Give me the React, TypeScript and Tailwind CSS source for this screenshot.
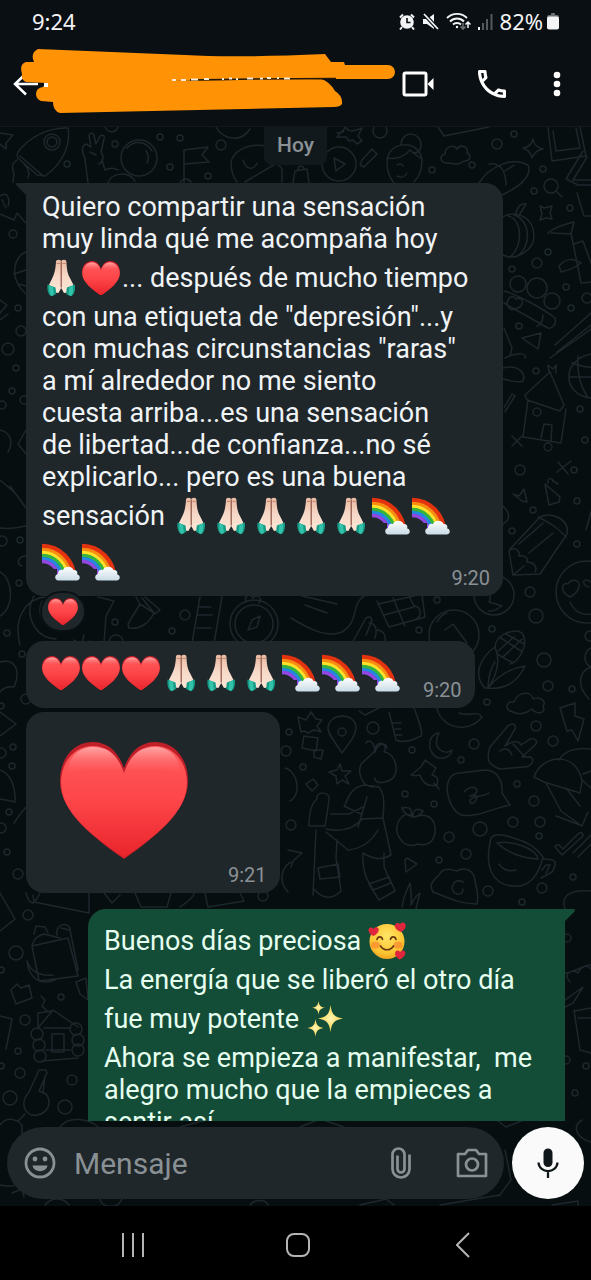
import type { ReactNode } from 'react';

const EmojiDefs = () => (
  <svg className="absolute w-0 h-0" aria-hidden="true">
    <defs>
      <linearGradient id="heartFill" x1="0" y1="0" x2="0" y2="1">
        <stop offset="0" stopColor="#ff5a5c" />
        <stop offset="0.5" stopColor="#fd4548" />
        <stop offset="1" stopColor="#e8242b" />
      </linearGradient>
      <linearGradient id="heartShine" x1="0" y1="0" x2="0" y2="1">
        <stop offset="0" stopColor="#ffb9b9" stopOpacity="0.8" />
        <stop offset="1" stopColor="#ff5a5c" stopOpacity="0" />
      </linearGradient>
      <linearGradient id="skin" x1="0" y1="0" x2="0" y2="1">
        <stop offset="0" stopColor="#e9b9a2" />
        <stop offset="0.5" stopColor="#f7d9c8" />
        <stop offset="1" stopColor="#fde6d6" />
      </linearGradient>
      <linearGradient id="cloud" x1="0" y1="0" x2="0" y2="1">
        <stop offset="0" stopColor="#ffffff" />
        <stop offset="1" stopColor="#c9dbe6" />
      </linearGradient>
      <radialGradient id="face" cx="0.5" cy="0.35" r="0.7">
        <stop offset="0" stopColor="#ffe566" />
        <stop offset="0.7" stopColor="#fcc431" />
        <stop offset="1" stopColor="#f09a1c" />
      </radialGradient>
      <radialGradient id="spark">
        <stop offset="0" stopColor="#fff6b0" />
        <stop offset="1" stopColor="#f7ce4a" />
      </radialGradient>
    </defs>
  </svg>
);

const HeartShape = () => (
  <>
    <path
      d="M64 26C58 9 47 0 33 0 13 0 0 17 0 39c0 31 34 57 64 78 30-21 64-47 64-78C128 17 115 0 95 0 81 0 70 9 64 26Z"
      fill="#c01e28"
    />
    <path
      d="M64 31C58 13 47 4 33 4 15 4 1 19 1 41c0 30 33 54 63 75 30-21 63-45 63-75C127 19 113 4 95 4 81 4 70 13 64 31Z"
      fill="url(#heartFill)"
    />
    <path d="M33 5c16 0 25 9 30 24-18-3-40-3-56 4C7 18 17 5 33 5Z" fill="url(#heartShine)" />
    <path d="M95 5C79 5 70 14 65 29c18-3 40-3 56 4C121 18 111 5 95 5Z" fill="url(#heartShine)" />
  </>
);

const Heart = ({ className }: { className: string }) => (
  <svg viewBox="0 0 128 117" className={className} role="img" aria-label="corazón rojo">
    <HeartShape />
  </svg>
);

// overflow-hidden puts the baseline on the bottom edge, whatever the drawing's height
const EmojiCell = ({ children }: { children: ReactNode }) => (
  <span className="inline-block h-[46px] w-10 overflow-hidden align-[-14px]">
    <span className="flex h-full items-center">{children}</span>
  </span>
);

const HeartEmoji = () => (
  <EmojiCell>
    <Heart className="w-[38px]" />
  </EmojiCell>
);

const Pray = () => (
  <EmojiCell>
    <svg viewBox="0 0 38 38" className="w-[38px]" role="img" aria-label="manos juntas">
      <path
        d="M14 2.500Q14 .8 16.200.8T19.200 2q.8-1.200 3-1.200t2.200 1.700C24.800 9 25 14 28.500 20l3.500 7-7 6.500-3 .5-2.800-5-2.800 5-3-.5-7-6.500 3.500-7C13 14 13.600 9 14 2.500Z"
        fill="url(#skin)"
      />
      <path d="M19.200 2.500v26" stroke="#8d5547" strokeWidth="1.200" fill="none" />
      <path d="M14.500 4.500h3.500M20.400 4.500h3.500" stroke="#b77f6c" strokeWidth="0.8" fill="none" />
      <path d="M5.500 25.500 13.500 28.500l.8 6.500-5 2.200C6 35.500 5 31 5.500 25.500Z" fill="#149c86" />
      <path d="m7.500 26.500 3.500 1.300.9 8.200-2.400 1c-2.200-2-2.600-6.300-2-10.500Z" fill="#35c3ab" />
      <path d="M32.900 25.500 24.900 28.500l-.8 6.500 5 2.200c3.300-1.700 4.300-6.200 3.800-11.700Z" fill="#149c86" />
      <path d="m30.900 26.500-3.500 1.300-.9 8.200 2.400 1c2.200-2 2.600-6.300 2-10.500Z" fill="#35c3ab" />
    </svg>
  </EmojiCell>
);

const rainbowBands = [
  { r: 34, color: '#e5320f' },
  { r: 30, color: '#fb8c12' },
  { r: 27, color: '#fde02a' },
  { r: 24, color: '#35b53c' },
  { r: 21, color: '#2388e0' },
  { r: 18, color: '#9147e0' },
];

const Rainbow = () => (
  <EmojiCell>
    <svg viewBox="0 0 38 38" className="w-[38px]" role="img" aria-label="arcoíris">
      {rainbowBands.map((band, i) => {
        const next = rainbowBands[i + 1]?.r ?? 15;
        const mid = (band.r + next) / 2;
        return (
          <path
            key={band.color}
            d={`M0 ${35 - mid}A${mid} ${mid} 0 0 1 ${mid} 35`}
            fill="none"
            stroke={band.color}
            strokeWidth={band.r - next + 0.3}
          />
        );
      })}
      <path d="M0 26h15v12H0z" fill="#20272b" />
      <path d="M34 27h4v11H20z" fill="#20272b" />
      <path
        d="M16.500 37.500c-4 0-4.500-5.800-.6-6.500 0-3.500 3-5 5-3.700 1.300-4.300 8.600-5.300 10.600-.3 3.500-.5 4.500 2.500 3.500 4.300 3.800.7 3.800 6.200-.5 6.200Z"
        fill="url(#cloud)"
      />
    </svg>
  </EmojiCell>
);

const LoveFace = () => (
  <EmojiCell>
    <svg viewBox="0 0 38 38" className="w-[38px]" role="img" aria-label="cara con corazones">
      <circle cx="19" cy="19.500" r="17.500" fill="url(#face)" />
      <ellipse cx="7.500" cy="23" rx="4.500" ry="3.500" fill="#f97b2b" opacity="0.6" />
      <ellipse cx="30" cy="23" rx="4.500" ry="3.500" fill="#f97b2b" opacity="0.6" />
      <path
        d="M9 17.500c.8-3.500 4.700-3.500 5.500-.2M22.500 17.300c.8-3.300 4.700-3.300 5.500.2M12.500 24c3 5 10 5 13 0"
        fill="none"
        stroke="#6b3a12"
        strokeWidth="1.700"
        strokeLinecap="round"
      />
      <path d="M5.500 14C1 11.500-.5 8.500 1 6.500s4-1 4.500.5c1-2 4-2.500 5-.2.900 2.700-1.500 5.200-5 7.200Z" fill="#e0263c" />
      <path d="M33 10c-5-2-7-4.800-6-7.200s4.200-2 5-.4c.7-2 4.500-2.800 5.500 0 .8 2.600-1 5.600-4.500 7.600Z" fill="#e0263c" />
      <path d="M31.500 37.500c-4-2.500-5.200-5.500-4-7.700s4-1.500 4.500.2c1-2 4.500-2.200 5.200.2.800 2.700-2 5.800-5.700 7.300Z" fill="#e0263c" />
    </svg>
  </EmojiCell>
);

const Sparkles = () => (
  <EmojiCell>
    <svg viewBox="0 0 38 38" className="w-[38px]" role="img" aria-label="destellos">
      <path d="M24.500 5c1.200 9 3.500 12 12.500 13.500-9 1.500-11.300 4.500-12.500 13.500C23.300 23 21 20 12 18.500 21 17 23.300 14 24.500 5Z" fill="url(#spark)" />
      <path d="M12.500 1c.7 4.500 1.900 6 6.500 6.700-4.600.7-5.800 2.200-6.500 6.700C11.800 9.900 10.600 8.400 6 7.700 10.600 7 11.800 5.500 12.500 1Z" fill="url(#spark)" />
      <path d="M9.500 19c.8 6 2.200 8 8 8.900-5.800.9-7.200 2.900-8 8.900-.8-6-2.200-8-8-8.900 5.800-.9 7.200-2.900 8-8.900Z" fill="url(#spark)" />
    </svg>
  </EmojiCell>
);

const dots = [
  [160, 137, 3], [180, 138, 3], [221, 145, 5], [115, 144, 3], [67, 164, 3], [170, 167, 3], [208, 176, 3],
  [380, 131, 7], [432, 170, 3], [472, 165, 3], [497, 144, 5], [514, 134, 3], [543, 169, 3], [534, 191, 3],
  [570, 208, 3], [548, 252, 3], [537, 263, 5], [512, 269, 3], [566, 287, 3], [518, 284, 8], [537, 288, 10],
  [552, 301, 8], [587, 298, 5], [571, 308, 3], [519, 326, 3], [536, 371, 3], [580, 409, 3], [537, 412, 4],
  [13, 234, 4], [18, 308, 3], [21, 331, 5], [8, 349, 6], [16, 368, 3], [12, 391, 3], [24, 400, 4],
  [2, 405, 4], [20, 540, 3], [2, 541, 5], [19, 583, 3], [7, 633, 3], [22, 654, 3], [26, 699, 5], [1, 706, 3],
  [533, 510, 3], [577, 501, 3], [512, 531, 3], [577, 544, 3], [530, 592, 5], [536, 616, 7], [437, 600, 3],
  [492, 629, 3], [419, 630, 3], [185, 615, 5], [115, 622, 3], [172, 631, 3], [116, 642, 7], [544, 660, 7],
  [548, 686, 5], [487, 702, 3], [572, 689, 3], [590, 636, 5], [373, 728, 6], [412, 750, 3], [474, 744, 5],
  [461, 760, 3], [536, 726, 5], [553, 741, 5], [517, 784, 3], [534, 801, 5], [303, 767, 3], [405, 794, 3],
  [434, 804, 3], [480, 829, 7], [449, 837, 5], [513, 822, 5], [540, 822, 5], [539, 836, 3], [466, 854, 5],
  [439, 860, 3], [488, 891, 5], [542, 888, 5], [573, 877, 3], [522, 902, 3], [289, 732, 3], [286, 751, 5],
  [291, 825, 5], [13, 747, 3], [1, 753, 5], [12, 766, 3], [9, 812, 3], [1, 828, 5], [7, 852, 3], [18, 874, 5],
  [28, 915, 5], [263, 896, 5], [16, 953, 7], [61, 997, 3], [1, 970, 3], [25, 1020, 5], [18, 1051, 3],
  [20, 1073, 5], [72, 1080, 5], [10, 1098, 7], [65, 1107, 7], [1, 1066, 3], [586, 1066, 3], [575, 1093, 3],
  [567, 938, 4], [566, 1060, 4], [548, 447, 4], [574, 470, 3], [520, 470, 5], [585, 440, 3],
];

// Line drawings behind the conversation
const Wallpaper = () => (
  <svg
    viewBox="0 127 591 1079"
    preserveAspectRatio="xMidYMin slice"
    className="absolute inset-0 h-full w-full"
    fill="none"
    stroke="#1e272b"
    strokeWidth="1.500"
    strokeLinecap="round"
    strokeLinejoin="round"
    aria-hidden="true"
  >
    {dots.map(([cx, cy, r]) => (
      <circle key={`${cx}-${cy}`} cx={cx} cy={cy} r={r} />
    ))}
    {/* rocket, peace sign, astronaut, flag */}
    <path d="M18 152c10-14 30-25 50-24 3 18-6 36-23 48l-8-1-19-17c-1-2-1-4 0-6ZM20 156l22 19M17 160c-6 4-5 8-3 14l-1 8M24 164c4 4 6 9 4 14" />
    <circle cx="52" cy="142" r="8" />
    <circle cx="52" cy="142" r="5" />
    <path d="m0 133 13 2-7 8v6l-6-5M85 158c-4-6-3-13 1-14l5 3-2-12c1-3 5-2 5 1l2 8 4-8c3-2 5 0 4 3l-3 13c3 4 3 9-2 12M85 159l3 24M102 160l3 10c6-3 10-2 13 0M90 152l6 3" />
    <circle cx="139" cy="158" r="18" />
    <path d="M127 148c8-9 20-6 25 3M146 151c3 4 3 8 1 12M108 183c3-10 20-13 27-2M184 183v-33l24-3-6 8 7 7-24 2M180 183c2-5 8-5 11-1M216 127c7 13 25 16 34 2M105 127c3 6 10 7 13 0" />
    <path d="M282 160c-2-20-46-20-51 2 0 7 2 15 6 20M243 160c4 11 11 10 14 3M245 182l32-19 5 6v13" />
    {/* play, bandage, head with bun */}
    <circle cx="339" cy="164" r="17" />
    <path d="m334 158 11 6-9 7ZM337 133l6-1 2-5M346 127c2 6 8 4 16 1l-4 8 4 5-5 3-4-4-4 1-3-4-9 0ZM362 160l10-11 5 5-13 13-4-2ZM293 183l2-12 12-2 2 14M298 169c1-4 5-4 6 0" />
    <path d="M387 162c0-22 33-23 35-2 0 10-4 18-8 22M387 162c0 9 3 17 8 22M388 158c10 2 18-3 22-8 5 4 8 7 11 8M401 145c1-16 20-13 20 0 0 6-4 8-8 8M397 165c3-2 5-1 6 1M397 176c4 2 8 1 10-3" />
    <path d="M447 163c-7 0-8-8-2-9 0-8 9-10 12-5 3-5 12-3 10 4 5 2 3 8-2 8-4 0-3 3-8 3-4 0-6-1-10-1ZM438 127l6 9 45-9M533 139c1 6 4 9 10 10-6 1-9 4-11 9-1-5-3-8-9-10 6-1 9-4 10-9ZM548 128l4 33 34-5-6-29M553 131l3 20 24-3-4-20M583 151l-17 28 12 6h13M587 157l-14 23h18M479 183c10-16 33-27 49-18 5 12-11 23-26 30M489 164c10-2 17 6 17 21M505 171l9-6" />
    {/* pumpkin, sticks, ball, house */}
    <circle cx="551" cy="186" r="7" />
    <path d="m556 191 6 6M503 217c12-8 31 0 31 19 0 15-19 25-31 19M508 216c14 2 16 30 2 41M514 215c17 5 18 33 2 42M516 213c2-8 6-10 10-9l-8 13M540 206l4 2 8-2-2 7 2 6-6-1-6 2 2-6ZM577 193l7 23h7M548 233c8-7 18-9 26-11l-3 12-20-1M571 233l10 50 10-1M574 244l9-3 8 22M559 266c7-8 13-8 22-3-8 6-15 8-20 9Z" />
    <path d="M504 291c12 3 40 18 51 27 2 6-3 11-7 10l-44-25M508 300c2-5 6-4 8-1 3-2 8 0 6 5-2 5-10 6-12 5-3-3-4-6-2-9ZM543 315c0 7-3 11-6 11M522 338l19-5-3 16ZM555 345l36-32M557 352l34-27M550 358l41-29M504 328l8 20-2 8M505 358c12-6 23-5 20 0M503 368c16-4 23 6 20 13-4 2-12 0-20-2" />
    <path d="M591 354c-30 6-29 41 0 44M572 363c12 4 17 5 19 4M570 377h21M578 356c-1 14 1 28 9 40M525 395l25-23 14 33-4 6-33-11ZM528 400l-5 37 38 6 5-34M541 438l3-14 8 1-1 16M549 372l-1-7 5 4 3-4v8M504 408l8-14 3 2-10 16M512 436l10 10m0-10-10 10M558 462l10 12m3-13-14 11" />
    {/* pencil, emoji face, swirl, corn */}
    <path d="m509 551 4 24 27-1 27-40c3-14-15-23-27-17l-29 31ZM513 575l11-9M510 550c7-4 10 3 9 6 7-1 9 2 8 6 6 0 11 4 8 10M519 544l24-21M529 553l24-20M538 517c12 6 19 10 28 20M513 494l6 2 5-7 3 13-5-1ZM545 484l15 13-1 5-10 3ZM548 483c-1-5 4-6 5-2l5 3M586 530l5-18M503 506c8 8 7 14 0 18" />
    <circle cx="587" cy="592" r="31" />
    <path d="M570 597c-12-6-7-16-2-13 4-7 13-3 11 3-1 4-5 8-9 10ZM570 602c4 9 12 14 21 12M591 582c-10-6-9 4-2 5" />
    <circle cx="494" cy="595" r="20" />
    <path d="M497 590c-12-3-4 7-8 12l13 4c-6 4-10 6-13 5M496 651c-5-15 18-24 26-18 8 11-4 30-12 31M501 638l20 13M506 634l18 10M498 651l16-14M503 657l19-18M497 654l16 9M485 688c-15-16 0-34 10-41 5 12 4 25-7 41 11-14 25-20 37-22-8 17-20 24-38 22ZM488 686c1-15 4-20 7-24" />
    {/* compass, ruler, crayon, left side */}
    <circle cx="254" cy="624" r="24" />
    <circle cx="254" cy="624" r="19" />
    <path d="m248 630 4-10 8-4-3 11ZM246 602c-2-8 4-8 7-4 4-4 10-1 6 5M200 597l-8 46M222 597l-8 46M199 607h12M198 615h14M197 628h14M128 624l12-20 14 9c-5 10-14 17-25 15ZM140 604l-4-7M142 598l13 16 5-4-15-13M20 645c-7-26 5-46 25-48M34 596c-11 20 2 42 22 43M42 601c-6 14 2 26 16 27M98 597l16 4-8 15-2 27M74 640l6 4M84 635l-2 8M89 641l-6 6M0 662c13-3 22 5 14 25-6-1-10 0-14 5" />
    <path d="M291 618c13 8 35 21 51 14 17-10 9-28 22-36M305 605l22 8M302 596l35 8M377 601l12 26 36-10-3-22M378 604l45-10M384 615l30-8M393 598l12 28M408 594l6 12c7 0 9 10 1 14M352 643l14-25c5-3 7 1 5 5l-5 12M369 623c6 0 9 6 6 15M377 630c8 1 9 7 8 12" />
    <circle cx="454" cy="635" r="25" />
    <path d="m445 630 8-6 14 19M437 622c2-4 6-8 10-9M513 712c-10-2-6-12 1-10 4-11 18-11 19-3 8-3 14 3 10 7 4 9-8 8-11 3-6 5-14 6-19 3ZM591 648c-8 4-8 15 0 19-13 5-14 20-2 32" />
    {/* map pin, moon, push pin, chat bubble, hand */}
    <path d="M342 753c-9-14-14-19-14-25 1-16 28-16 28 0 0 7-6 14-14 25ZM299 722l-1-5 8 3 5-8 5 7 6 1-5 6 4 6-7-2-6 3-4-2-3 1ZM304 736l14 2-2 13-14-3ZM314 750h9l-2 9-7-2ZM306 784l7-5 5 6-6 6ZM340 764l2 7 9 0-6 5 4 8-7-4-5 4-1-8-7-4 8-2Z" />
    <circle cx="342" cy="732" r="4" />
    <path d="M439 733c-8 16 6 23 13 17-1 6-7 9-13 8-11-2-14-23 0-25ZM425 760l11 8-4 7c7 2 6 5 5 10-8 2-14-1-17-10-4 1-4 1-9 0l10-8ZM434 783l5 6M389 712l7 28c8 4 19-1 25-4 3-3-7-28-7-28M393 723h8M395 729h6M396 735h6M359 711l6 4 16-8M437 708c3 18 30 28 45 9-3-7-14 0-23-4" />
    <path d="M462 815c-15-4-23-42-2-42l25-3c13 0 18 12 17 23l8 12c-16 3-34 13-48 10ZM464 792c8-11 21 0 6 4 0 0 6-1 7 0-1 9-8 9-7 4 3-5 14-3 19-7M490 747l17-20c5-5 10-3 8 2l-10 17c7-5 14-6 16-1l9-6c6-1 9 3 4 7l-12 11h8c7 3 0 10-6 10l-24 2c-12-4-14-10-10-22ZM500 751c7-5 10 0 12 4M513 744l12 13M560 708l15-5v13l9 3-6 22-6-11-5 1Z" />
    <path d="M534 777c8-23 43-26 48 4l-2 12-36-11ZM559 760c5-9 17-13 32-11M546 783l15 28 21 15 6-14M556 816l24 9M566 788l14 18M583 774l8-3M582 780l9 8" />
    {/* walking figure, apple, cup, cloud camera, ticks */}
    <path d="M373 787c-13-1-15-16-12-23l13-12c3-15 15-8 10 0 12 0 20 28 0 30-6 2-10-2-9-4M366 743c3-5 9 0 9 9 2-7 10-12 12-4M345 805c5-14 11-19 20-20l14 2c4 5 6 10 4 31l-21 1M367 797l-9 30M344 806l17 8M309 826c0-18 4-24 8-27-2-8 14-8 12 1l-2 14-2 12ZM331 814h18l14-7M326 829c15 3 27 1 36-10M326 832l22 18c10-1 22-6 30-20M383 818l8 37c-10 6-18 4-28-2M316 830l-3 65M337 840l-1 18 5 33c-10 10-20 7-28-3M363 853c-1 18 3 25 10 37l18-7-7-16v-14M369 884l20-7 6 14-16 9ZM318 868l20-4 2 13-20 2Z" />
    <path d="M415 817c-12-9-22 8-17 18 5 11 13 12 20 9 11 3 18-4 17-17-1-9-9-15-20-10ZM410 816c-9-4-8-11-8-8 8-2 11 2 9 9M413 817c-1-8 5-9 10-6-2 3-6 6-10 6M405 860l2-2 10 6-11 8ZM490 843c0-10 9-9 17-7 18 5 27 9 36 21-4 18-14 31-30 29-21-1-28-20-23-43ZM497 843c10 9 23 15 41 16-2-11-27-19-41-16ZM544 859c12 0 14 3 8 13l-11 6M542 870l4-5h4l-4 8M499 864c4 6 9 8 17 6" />
    <path d="M433 892c-6-10 5-14 8-20 5-5 13-2 16-1 7-4 17-2 18 10 2 8 4 16 2 23-17 0-25-5-44-12ZM463 882c-10-6-15 10-6 12 4 1 6-2 6-5M555 847c2-4 5-2 8 2l16-16c4-1 5 2 3 4l-20 18ZM573 853l18-18M578 857l13-13M565 909c-4-12 3-20 26-18M402 907c2-14 5-16 8-24 1 8 2 14 1 22 3-7 6-10 9-12-2 7-3 11-4 16M288 850l14 3-9 8-2 6" />
    {/* strip under the big heart */}
    <path d="M26 893c5 16 9 10 14 0M33 895l1 7 55 11v-20M104 893l8 10 8-8M135 893l6 14h26l4-14M180 907c12-8 14-12 14-14M205 893l3 14 36-6-4-8M0 893l15 26-15 12M0 770c12 4 16 20 15 32-8-2-15-3-15-3M14 823c5-8 12-16 12-16M291 862c-8 4-14 18-3 30M285 768c14 4 16 28 5 33M0 712l16 12-16 12" />
    {/* left margin next to the first message */}
    <path d="M0 196c8-6 10 4 8 10M0 214l14 6 3-7 9 10M2 200l4 8M26 252c-12 4-18 26 0 42M14 274l12-4M18 284l8 2M0 300l7 5-7 8M0 320l8-6M0 480l14 12M10 486l16 22M0 528c8 1 18 0 26-2M0 572c14 8 14 36 0 44M26 556c-8 0-10 8-4 10M0 430c10 2 14 12 8 22M26 430l-8 14 8 10" />
    {/* backpack, log cabin, keys */}
    <path d="m32 946 36-8 10 38-39 5ZM32 946c2-8 6-10 12-12l16 4M34 934l2-8 9 1 3 6M57 935c-2-14 14-12 13-5l8 40M61 928l8 2M27 961c2 20 16 24 28 19M27 961c4 12 14 15 26 14M11 990l6-6 4 4 8-3 3 13-16 6ZM41 996l4 4-3 6 5 5M76 982l10-4 2 22-8-6ZM38 1028l15-18 25 17M38 1013l14-2M38 1028v-15M52 1034h12v18H52ZM44 1028h26M46 1050h24M42 1061l36-3" />
    <circle cx="37" cy="1034" r="6" />
    <circle cx="39" cy="1045" r="6" />
    <circle cx="40" cy="1056" r="6" />
    <circle cx="76" cy="1029" r="6" />
    <circle cx="78" cy="1040" r="6" />
    <circle cx="78" cy="1050" r="6" />
    <path d="M29 1092c-10 11-4 25 8 23 12-2 15-14 9-21l-7-3 8-18-1-3h-7ZM45 1076l-2 16M25 1114l-7 7M0 1125c6-8 16-7 22 0v20M0 1016l12 3-6 30M570 982c-8-8 2-14 8-9 3-8 10-8 13-4M565 973c13-2 18-8 26-8M565 1000l18-13-10 16-8 4M574 1010l6 40 11 3M574 1011l17-3M578 1018h13" />
    {/* behind the composer */}
    <path d="M60 1127c8-12 30-8 38 0M180 1127l30-8M300 1127l20-8 24 8M490 1115l16 12 20-8M0 1185c20 4 28-5 28-12M12 1193l10-4 2 8M45 1205c6-8 18-8 24 0M100 1199c2 10 18 10 22 0M250 1205c4-6 16-6 18 0M360 1205l26-6 8 6M440 1205l60-10M505 1150l6 30-12 16M552 1205l26-4v4M582 1120c-10 6-6 18 9 22" />
  </svg>
);

const Time = ({ children }: { children: string }) => (
  <time className="shrink-0 text-[20px] leading-6 text-[#8a9195]">{children}</time>
);

const StatusBar = () => (
  <div className="flex h-11 items-center justify-between px-8 pb-0.5 font-['Noto_Sans',sans-serif] text-[22px] text-[#f2f4f5]">
    <span>9:24</span>
    <div className="flex items-center gap-[7px]">
      <svg viewBox="0 0 16 17" className="w-4" aria-hidden="true">
        <circle cx="8" cy="9" r="6.800" fill="#f2f4f5" />
        <path d="M1 4.500 4 1.500M15 4.500l-3-3M3 14l-2 2.500M13 14l2 2.500" stroke="#f2f4f5" strokeWidth="2" />
        <path d="M8 5v4.500h3.500" fill="none" stroke="#0a0f13" strokeWidth="1.600" />
      </svg>
      <svg viewBox="0 0 17 17" className="w-[17px]" aria-hidden="true">
        <path d="M1 6h4l7-5v15l-7-5H1Z" fill="#f2f4f5" />
        <path d="m2 1 14 15" stroke="#0a0f13" strokeWidth="4" />
        <path d="m2 1 14 15" stroke="#f2f4f5" strokeWidth="1.800" />
      </svg>
      <svg viewBox="0 0 25 18" className="w-[25px]" fill="none" stroke="#f2f4f5" strokeWidth="1.900" aria-hidden="true">
        <path d="M1 6c5.500-5.500 14.500-5.500 20 0M4 9.500c4-4 10-4 14 0M7 12.500c2-2 6-2 8 0" />
        <circle cx="11" cy="15" r="1.200" fill="#f2f4f5" stroke="none" />
        <path d="M17 11v6m-2.500-2.500L17 17l2.500-2.500" stroke="#6b7073" strokeWidth="1.500" />
        <path d="M22 16v-6m-2.500 2.500L22 10l2.500 2.500" strokeWidth="1.500" />
      </svg>
      <svg viewBox="0 0 15 17" className="w-[15px]" aria-hidden="true">
        <path d="M0 14h2v3H0z" fill="#f2f4f5" />
        <path d="M4 10h2v7H4zM8 6h2v11H8zM12.500 1h2v16h-2z" fill="#55595c" />
      </svg>
      <div className="flex items-center gap-1">
        <span>82%</span>
        <svg viewBox="0 0 12 18" className="w-3" aria-hidden="true">
          <path d="M4 1.500Q4 1 5 1h2q1 0 1 .5V3h2q2 0 2 2v1H0V5q0-2 2-2h2Z" fill="#6b7073" />
          <rect y="4.500" width="12" height="13" rx="2" fill="#f2f4f5" />
        </svg>
      </div>
    </div>
  </div>
);

const Header = () => (
  <header className="relative shrink-0 border-b border-[#12191d] bg-[#0a0f13]">
    <StatusBar />
    <div className="flex h-[82px] items-center justify-between pb-0.5 pl-3 pr-[30px] text-white">
      <button type="button" aria-label="Atrás" className="flex h-10 items-center">
        <svg viewBox="0 0 28 24" className="w-7" fill="none" stroke="currentColor" strokeWidth="2.500" aria-hidden="true">
          <path d="M14 1.500 3 12l11 10.500M3 12h23" />
        </svg>
      </button>
      <div className="flex items-center">
        <button type="button" aria-label="Videollamada" className="mr-11">
          <svg viewBox="0 0 32 26" className="w-8" fill="none" stroke="currentColor" strokeWidth="3" aria-hidden="true">
            <rect x="2" y="2" width="22" height="22" rx="1.500" />
            <path d="m25.500 13 6-6v12Z" fill="currentColor" stroke="none" />
          </svg>
        </button>
        <button type="button" aria-label="Llamar" className="mr-[47px]">
          <svg viewBox="3 3 18 18" className="w-7" fill="currentColor" aria-hidden="true">
            <path d="M6.540 5c.06.89.21 1.760.45 2.590l-1.200 1.200c-.41-1.200-.67-2.470-.76-3.790h1.510m9.860 12.020c.85.24 1.720.39 2.600.45v1.490c-1.320-.09-2.590-.35-3.800-.75l1.200-1.190M7.500 3H4c-.55 0-1 .45-1 1 0 9.390 7.610 17 17 17 .55 0 1-.45 1-1v-3.490c0-.55-.45-1-1-1-1.240 0-2.450-.2-3.570-.57-.1-.04-.21-.05-.31-.05-.26 0-.51.1-.71.29l-2.200 2.200c-2.830-1.450-5.150-3.760-6.590-6.590l2.200-2.200c.28-.28.36-.67.25-1.020C8.700 6.450 8.500 5.250 8.500 4c0-.55-.45-1-1-1z" />
          </svg>
        </button>
        <button type="button" aria-label="Más opciones">
          <svg viewBox="0 0 8 26" className="w-2" fill="currentColor" aria-hidden="true">
            <circle cx="4" cy="4" r="3.300" />
            <circle cx="4" cy="13" r="3.300" />
            <circle cx="4" cy="22" r="3.300" />
          </svg>
        </button>
      </div>
    </div>
    {/* marker strokes hiding the contact name */}
    <svg viewBox="0 0 400 80" className="absolute left-0 top-10 w-[400px]" aria-hidden="true">
      <path
        d="M38 9 185 15q50 3 140-1l6 8h13l1 3h43a6 6 0 0 1 0 14h-64L168 41l153-2q8 2 14 12 8 5 7 13-2 3-8 3L60 73q-7-2-7-11l-12-1q-5-2-5-7 0-6 7-7l3-4-20-1q-5-2-4-8-3-10 4-12h8q-4-9 4-13Z"
        fill="#ff9205"
      />
      <path d="M190 40q70-1.500 146-1.500" fill="none" stroke="#22170a" strokeWidth="1.400" />
      <path
        d="M172 40h4M181 40h5M191 39.500h7M204 39h5M222 39h2M229 38.500h3M236 39h2M247 38.500h6M260 38.500h3M267 38h4M277 38h2M284 38.500h6"
        stroke="#f7ead8"
        strokeWidth="1.800"
        fill="none"
      />
      <path d="M44 43h4v4h-4Z" fill="#fff" />
    </svg>
  </header>
);

const Bubble = ({ children, className = '' }: { children: ReactNode; className?: string }) => (
  <article className={`rounded-[18px] bg-[#20272b] pr-[13px] text-[#f0f4f6] ${className}`}>{children}</article>
);

const Messages = () => (
  <section className="relative min-h-0 flex-1 overflow-hidden px-[26px] text-[27px] leading-8">
    <div className="flex justify-center">
      <h2 className="rounded-b-lg bg-[#12191d] px-[13px] pb-1 pt-0.5 text-[21px] font-medium text-[#8a9195]">Hoy</h2>
    </div>

    <div className="relative mr-[62px] mt-[18px]">
      <svg viewBox="0 0 18 18" className="absolute -left-2.5 top-0 w-[18px]" aria-hidden="true">
        <path d="M1 0h17v18h-8V12L0 2Q0 0 1 0Z" fill="#20272b" />
      </svg>
      <Bubble className="relative flex flex-col whitespace-nowrap rounded-tl-none pb-1.5 pl-4 pt-2">
        <p>
          Quiero compartir una sensación
          <br />
          muy linda qué me acompaña hoy
          <br />
          <Pray />
          <HeartEmoji />
          ... después de mucho tiempo
          <br />
          con una etiqueta de "depresión"...y
          <br />
          con muchas circunstancias "raras"
          <br />
          a mí alrededor no me siento
          <br />
          cuesta arriba...es una sensación
          <br />
          de libertad...de confianza...no sé
          <br />
          explicarlo... pero es una buena
          <br />
          sensación <Pray />
          <Pray />
          <Pray />
          <Pray />
          <Pray />
          <Rainbow />
          <Rainbow />
          <br />
          <Rainbow />
          <Rainbow />
        </p>
        <div className="-mt-[19px] flex justify-end">
          <Time>9:20</Time>
        </div>
      </Bubble>
    </div>

    <div className="relative -mt-[5px] ml-[14px] flex h-[41px] w-[46px] items-center justify-center rounded-full border-2 border-[#0a1115] bg-[#20272b]">
      <Heart className="w-[30px]" />
    </div>

    <Bubble className="relative mt-[9px] flex w-fit items-end gap-[21px] pb-1.5 pl-4 pt-[9px]">
      <p className="mb-1.5 flex">
        <HeartEmoji />
        <HeartEmoji />
        <HeartEmoji />
        <Pray />
        <Pray />
        <Pray />
        <Rainbow />
        <Rainbow />
        <Rainbow />
      </p>
      <Time>9:20</Time>
    </Bubble>

    <Bubble className="relative mt-1 flex w-fit items-end gap-10 pb-1.5 pl-[34px] pt-[30px]">
      <Heart className="mb-7 w-32" />
      <Time>9:21</Time>
    </Bubble>

    <div className="relative ml-[62px] mt-4">
      <svg viewBox="0 0 18 18" className="absolute -right-2.5 top-0 w-[18px]" aria-hidden="true">
        <path d="M17 0H0v18h8V12L18 2q0-2-1-2Z" fill="#144d37" />
      </svg>
      <article className="whitespace-nowrap rounded-[18px] rounded-tr-none bg-[#144d37] px-4 pb-8 pt-[9px] text-[#e6fff0]">
        Buenos días preciosa <LoveFace />
        <br />
        La energía que se liberó el otro día
        <br />
        fue muy potente <Sparkles />
        <br />
        Ahora se empieza a manifestar,&nbsp; me
        <br />
        alegro mucho que la empieces a
        <br />
        sentir así
      </article>
    </div>
  </section>
);

const Composer = () => (
  <form className="relative mt-1.5 flex shrink-0 items-center gap-2 px-[7px] pb-[7px]">
    <div className="flex h-[72px] min-w-0 flex-1 items-center rounded-full bg-[#20272b] pl-[17px] pr-4 text-[#8a9195]">
      <button type="button" aria-label="Emojis" className="shrink-0">
        <svg viewBox="0 0 32 32" className="w-8" fill="currentColor" aria-hidden="true">
          <circle cx="16" cy="16" r="14" fill="none" stroke="currentColor" strokeWidth="2.800" />
          <circle cx="11" cy="12" r="2.400" />
          <circle cx="21" cy="12" r="2.400" />
          <path d="M8.500 18.500h15c-1 7.500-14 7.500-15 0Z" />
        </svg>
      </button>
      <input
        type="text"
        aria-label="Mensaje"
        placeholder="Mensaje"
        className="ml-[18px] min-w-0 flex-1 bg-transparent text-[30px] outline-none placeholder:text-[#8a9195]"
      />
      <button type="button" aria-label="Adjuntar" className="mr-[45px] shrink-0">
        <svg viewBox="0 0 20 32" className="w-5" fill="none" stroke="currentColor" strokeWidth="2.700" aria-hidden="true">
          <path d="M18.500 7.500V22a8.500 8.500 0 0 1-17 0V7.500a6 6 0 0 1 12 0V22a3.500 3.500 0 0 1-7 0V8.500" />
        </svg>
      </button>
      <button type="button" aria-label="Cámara" className="shrink-0">
        <svg viewBox="0 0 32 30" className="w-8" fill="none" stroke="currentColor" strokeWidth="2.700" strokeLinejoin="round" aria-hidden="true">
          <path d="M2 6h7l3-4h8l3 4h7v22H2Z" />
          <circle cx="16" cy="16.500" r="6" />
        </svg>
      </button>
    </div>
    <button
      type="button"
      aria-label="Grabar audio"
      className="flex size-[72px] shrink-0 items-center justify-center rounded-full bg-[#fafafa] text-[#0f171b]"
    >
      <svg viewBox="0 0 22 30" className="w-[22px]" fill="none" stroke="currentColor" strokeWidth="2.300" aria-hidden="true">
        <rect x="6.500" y="0.500" width="9" height="18.500" rx="4.500" fill="currentColor" stroke="none" />
        <path d="M1.500 14.500c.8 11.500 18.200 11.500 19 0M11 23v7" />
      </svg>
    </button>
  </form>
);

const NavBar = () => (
  <nav className="grid h-[74px] shrink-0 grid-cols-3 items-center bg-black pl-[50px] pr-[46px] pt-1 text-[#b4b4b4]">
    <button type="button" aria-label="Recientes" className="flex justify-center">
      <svg viewBox="0 0 24 24" className="w-6" stroke="currentColor" strokeWidth="2" aria-hidden="true">
        <path d="M2 0v24M12 0v24M22 0v24" />
      </svg>
    </button>
    <button type="button" aria-label="Inicio" className="flex justify-center">
      <svg viewBox="0 0 26 26" className="w-[26px]" fill="none" stroke="currentColor" strokeWidth="2" aria-hidden="true">
        <rect x="2" y="2" width="22" height="22" rx="7" />
      </svg>
    </button>
    <button type="button" aria-label="Volver" className="flex justify-center">
      <svg viewBox="0 0 14 26" className="w-3.5" fill="none" stroke="currentColor" strokeWidth="2" aria-hidden="true">
        <path d="M13 1 1 13l12 12" />
      </svg>
    </button>
  </nav>
);

const App = () => {
  return (
    <div className="flex h-screen flex-col overflow-hidden bg-[#060e10] font-[Roboto,sans-serif]">
      <EmojiDefs />
      <Header />
      <main className="relative flex min-h-0 flex-1 flex-col">
        <Wallpaper />
        <Messages />
        <Composer />
      </main>
      <NavBar />
    </div>
  );
};

export default App;
